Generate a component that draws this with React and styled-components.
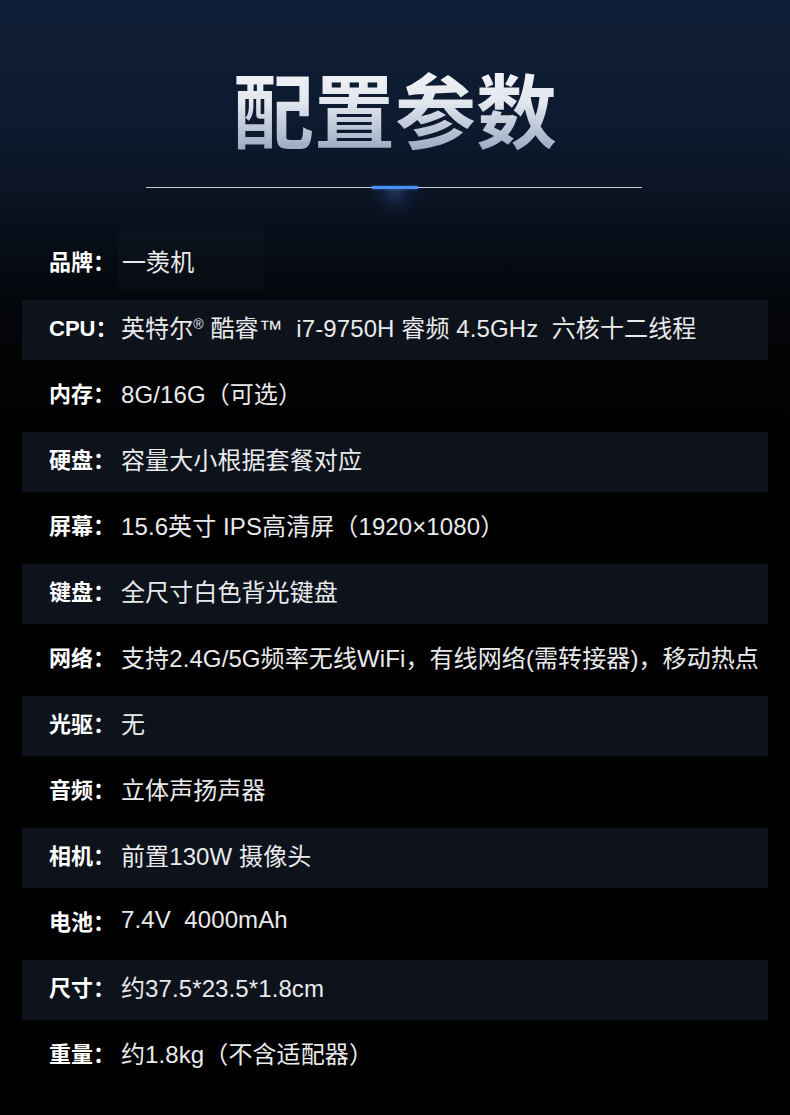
import React from "react";
import styled, { createGlobalStyle } from "styled-components";

const Global = createGlobalStyle`
  html, body { margin: 0; padding: 0; background: #000; }
  body { font-family: "Liberation Sans", "Noto Sans CJK SC", sans-serif; }
  * { box-sizing: border-box; }
`;

const Page = styled.div`
  width: 790px;
  height: 1115px;
  overflow: hidden;
  background: linear-gradient(
    180deg,
    #0f1f37 0px,
    #0d1a2f 120px,
    #0a1322 200px,
    #04070c 290px,
    #010203 380px,
    #000 520px
  );
`;

const Header = styled.header`
  padding-top: 63px;
  display: flex;
  flex-direction: column;
  align-items: center;
`;

const Title = styled.h1`
  margin: 0;
  font-family: "Noto Sans CJK SC", sans-serif;
  font-size: 81px;
  line-height: 88px;
  font-weight: 700;
  background: linear-gradient(180deg, #f4f5f8 0%, #e2e6ee 45%, #9aa9c2 100%);
  -webkit-background-clip: text;
  background-clip: text;
  color: transparent;
`;

const Divider = styled.div`
  position: relative;
  margin-top: 36px;
  width: 496px;
  height: 1px;
  margin-left: -2px;
  background: #c7ccd6;
`;

const Accent = styled.div`
  position: absolute;
  left: 226px;
  top: -1px;
  width: 46px;
  height: 3px;
  background: #4a8ff2;
  box-shadow: 0 0 3px rgba(74, 143, 242, 0.6);
  &::after {
    content: "";
    position: absolute;
    left: -4px;
    right: -4px;
    top: 3px;
    height: 30px;
    background: radial-gradient(
      ellipse 50% 100% at 50% 0%,
      rgba(70, 120, 210, 0.35),
      rgba(40, 80, 160, 0.12) 55%,
      rgba(0, 0, 0, 0) 100%
    );
  }
`;

const List = styled.ul`
  list-style: none;
  margin: 46px 0 0;
  padding: 0 22px;
  display: flex;
  flex-direction: column;
  gap: 6px;
`;

const Row = styled.li`
  height: 60px;
  display: flex;
  align-items: center;
  padding: 0 0 8px 27px;
  background: ${(p) => (p.$band ? "#0d121b" : "transparent")};
`;

const Label = styled.span`
  font-size: 22px;
  font-weight: 700;
  color: #fff;
  white-space: nowrap;
  flex: none;
  width: 72px;
`;

const Value = styled.span`
  font-size: 24px;
  font-weight: 400;
  color: #e9eaec;
  white-space: pre;
  letter-spacing: 0.1px;
  ${(p) =>
    p.$boxed &&
    `
    margin-left: -3px;
    padding: 12px 70px 12px 4px;
    background: rgba(255,255,255,0.018);
  `}
`;

const Sup = styled.sup`
  font-size: 14px;
  vertical-align: 8px;
  line-height: 0;
`;

const specs = [
  ["品牌：", "一羡机"],
  [
    "CPU：",
    <>
      英特尔<Sup>®</Sup> 酷睿™  i7-9750H 睿频 4.5GHz  六核十二线程
    </>,
  ],
  ["内存：", "8G/16G（可选）"],
  ["硬盘：", "容量大小根据套餐对应"],
  ["屏幕：", "15.6英寸 IPS高清屏（1920×1080）"],
  ["键盘：", "全尺寸白色背光键盘"],
  ["网络：", "支持2.4G/5G频率无线WiFi，有线网络(需转接器)，移动热点"],
  ["光驱：", "无"],
  ["音频：", "立体声扬声器"],
  ["相机：", "前置130W 摄像头"],
  ["电池：", "7.4V  4000mAh"],
  ["尺寸：", "约37.5*23.5*1.8cm"],
  ["重量：", "约1.8kg（不含适配器）"],
];

export default function App() {
  return (
    <Page>
      <Global />
      <Header>
        <Title>配置参数</Title>
        <Divider>
          <Accent />
        </Divider>
      </Header>
      <List>
        {specs.map(([label, value], i) => (
          <Row key={label} $band={i % 2 === 1}>
            <Label>{label}</Label>
            <Value $boxed={i === 0}>{value}</Value>
          </Row>
        ))}
      </List>
    </Page>
  );
}
